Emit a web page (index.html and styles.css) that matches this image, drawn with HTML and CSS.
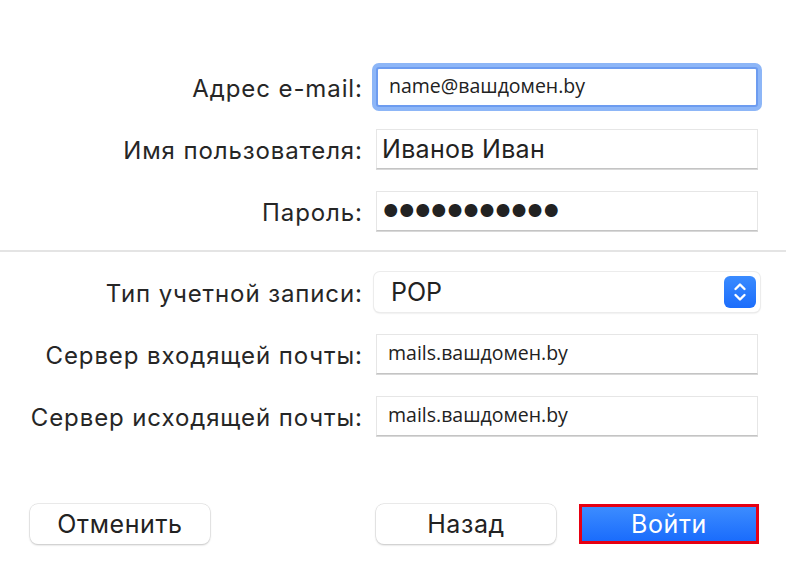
FILE: index.html
```html
<!DOCTYPE html>
<html lang="ru">
<head>
    <meta charset="utf-8">
    <title>Добавить учетную запись</title>
    <link rel="stylesheet" href="styles.css">
</head>
<body>
    <div class="dialog">
        <!-- Данные пользователя -->
        <div class="fields">
            <label class="label" for="email">Адрес e-mail:</label>
            <div class="field field-focus small" id="email">name@вашдомен.by</div>

            <label class="label" for="user">Имя пользователя:</label>
            <div class="field" id="user">Иванов Иван</div>

            <label class="label" for="pass">Пароль:</label>
            <div class="field dots" id="pass">●●●●●●●●●●●</div>
        </div>

        <div class="divider"></div>

        <!-- Настройки сервера -->
        <div class="fields">
            <label class="label">Тип учетной записи:</label>
            <div class="popup">
                <span>POP</span>
                <span class="stepper">
                    <svg width="16" height="22" viewBox="0 0 16 22">
                        <path d="M3.5 8 L8 3.5 L12.5 8 M3.5 14 L8 18.5 L12.5 14" fill="none" stroke="#fff" stroke-width="2.4" stroke-linecap="round" stroke-linejoin="round"/>
                    </svg>
                </span>
            </div>

            <label class="label">Сервер входящей почты:</label>
            <div class="field small">mails.вашдомен.by</div>

            <label class="label">Сервер исходящей почты:</label>
            <div class="field small">mails.вашдомен.by</div>
        </div>

        <div class="buttons">
            <button class="btn">Отменить</button>
            <button class="btn btn-back">Назад</button>
            <button class="btn btn-primary">Войти</button>
        </div>
    </div>
</body>
</html>
```

FILE: styles.css
```css
body {
    margin: 0;
    background: #fff;
    font-family: Inter, "Noto Sans", sans-serif;
    color: #262626;
}

.dialog {
    width: 786px;
    height: 578px;
    padding-top: 67px;
    box-sizing: border-box;
}

.fields {
    display: grid;
    grid-template-columns: 362px 382px;
    grid-auto-rows: 40px;
    column-gap: 14px;
    row-gap: 22px;
}

.label {
    justify-self: end;
    align-self: center;
    font-size: 24px;
    letter-spacing: 0.9px;
    margin-right: -0.9px;
    padding-top: 2px;
}

.field {
    background: #fff;
    border: 1px solid #e6e6e6;
    border-bottom-color: #c4c4c4;
    box-shadow: 0 1px 0 #d8d8d8;
    display: flex;
    align-items: center;
    padding: 0 5px;
    font-size: 25px;
    letter-spacing: 0.3px;
    color: #222;
    box-sizing: border-box;
}

.field.small {
    font-family: "Open Sans", sans-serif;
    font-size: 19.5px;
    letter-spacing: 0;
    padding-left: 11px;
    padding-bottom: 3px;
}

.field-focus {
    border: 2px solid #6d9cf0;
    border-radius: 3px;
    box-shadow: 0 0 0 4px #8db6f7;
    padding-left: 9px;
}

.dots {
    font-size: 17px;
    letter-spacing: 0.5px;
    padding-left: 6px;
}

.divider {
    height: 2px;
    background: #e4e4e4;
    margin: 19px 0 20px;
}

.popup {
    display: flex;
    align-items: center;
    justify-content: space-between;
    margin-left: -2px;
    margin-right: -2px;
    padding: 0 4px 0 17px;
    border-radius: 6px;
    background: #fff;
    box-shadow: 0 0 0 1px #ececec, 0 1px 2px rgba(0, 0, 0, 0.18);
    font-size: 25px;
    color: #222;
}

.stepper {
    width: 32px;
    height: 32px;
    border-radius: 6px;
    background: linear-gradient(#3a8bff, #1c6dfb);
    display: flex;
    align-items: center;
    justify-content: center;
}

.buttons {
    display: flex;
    padding: 0 27px 0 30px;
    margin-top: 68px;
}

.btn {
    width: 180px;
    height: 40px;
    border: none;
    border-radius: 8px;
    background: #fff;
    box-shadow: 0 0 0 0.5px #d6d6d6, 0 1px 2px rgba(0, 0, 0, 0.25);
    font-family: Inter, "Noto Sans", sans-serif;
    font-size: 25px;
    letter-spacing: 0.6px;
    color: #222;
    padding: 0;
}

.btn-back {
    margin-left: auto;
}

.btn-primary {
    margin-left: 23px;
    border: 3px solid #e60012;
    border-radius: 0;
    background: linear-gradient(#3c8cff, #1a6cfc);
    color: #fff;
    box-shadow: none;
}
```
